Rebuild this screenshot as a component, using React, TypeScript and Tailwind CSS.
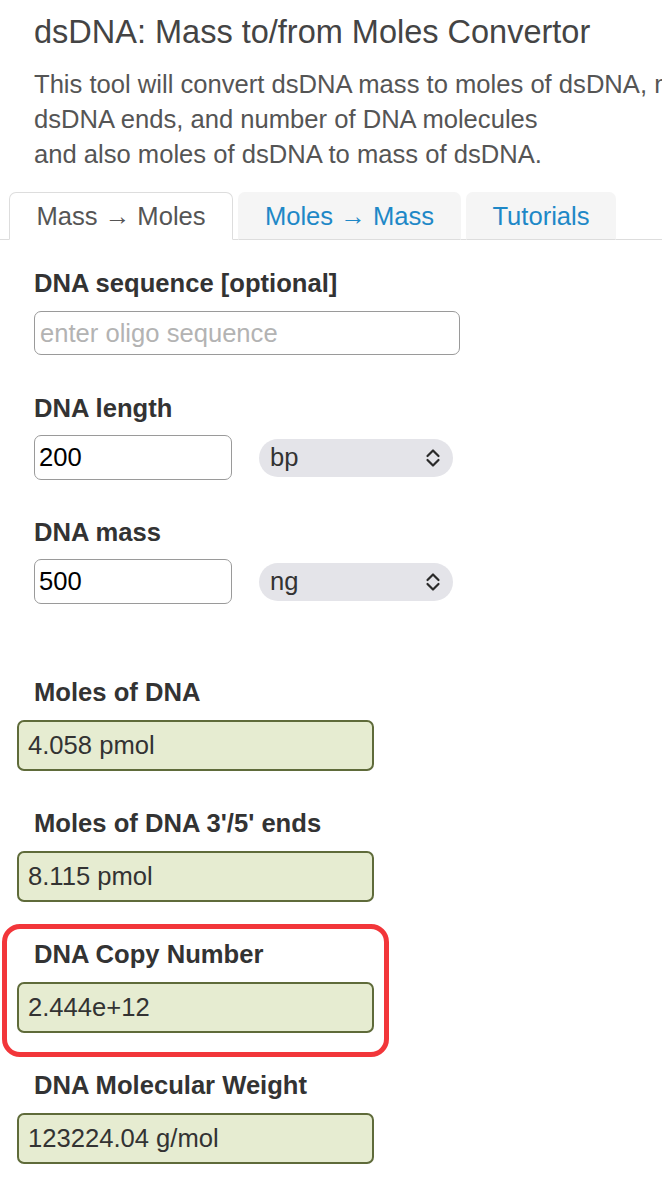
import { useState } from "react";

function UpDown() {
  return (
    <svg width="16" height="20" viewBox="0 0 16 20" fill="none">
      <path d="M2.5 8 L8 2.5 L13.5 8" stroke="#2a2a2a" strokeWidth="2.2" strokeLinecap="round" strokeLinejoin="round" />
      <path d="M2.5 12 L8 17.5 L13.5 12" stroke="#2a2a2a" strokeWidth="2.2" strokeLinecap="round" strokeLinejoin="round" />
    </svg>
  );
}

function Label({ children, className = "" }: { children: React.ReactNode; className?: string }) {
  return (
    <div className={`text-[25.6px] font-bold leading-[30px] text-[#333] whitespace-nowrap ${className}`}>{children}</div>
  );
}

function Output({ value }: { value: string }) {
  return (
    <div className="mt-[13px] flex h-[51px] w-[357px] items-center rounded-[7px] border-2 border-[#5f6b3a] bg-[#e6ecd1] pl-[9px] text-[25.6px] text-[#333]">
      {value}
    </div>
  );
}

function UnitRow({ value, unit }: { value: string; unit: string }) {
  return (
    <div className="mt-[12px] flex items-center gap-[27px]">
      <input
        defaultValue={value}
        className="h-[45px] w-[198px] rounded-[7px] border border-[#9a9a9a] bg-white px-[4px] text-[25.6px] text-black outline-none"
      />
      <div className="flex h-[38px] w-[194px] items-center justify-between rounded-full bg-[#e4e4e9] pl-[11px] pr-[12px] text-[25.6px] text-[#333]">
        <span>{unit}</span>
        <UpDown />
      </div>
    </div>
  );
}

export default function App() {
  const [tab, setTab] = useState(0);
  const tabs = [
    { name: "Mass → Moles", w: "w-[224px]" },
    { name: "Moles → Mass", w: "w-[223px]" },
    { name: "Tutorials", w: "w-[150px]" },
  ];

  const results = [
    { label: "Moles of DNA", value: "4.058 pmol" },
    { label: "Moles of DNA 3'/5' ends", value: "8.115 pmol" },
    { label: "DNA Copy Number", value: "2.444e+12", marked: true },
    { label: "DNA Molecular Weight", value: "123224.04 g/mol" },
  ];

  return (
    <div className="w-[662px] overflow-hidden bg-white pb-[34px] font-['Liberation_Sans',Arial,sans-serif]">
      <h1 className="ml-[34px] mt-[12px] whitespace-nowrap text-[32.5px] leading-[40px] text-[#444]">
        dsDNA: Mass to/from Moles Convertor
      </h1>
      <p className="ml-[34px] mt-[15px] whitespace-nowrap text-[25.6px] leading-[35px] text-[#555]">
        This tool will convert dsDNA mass to moles of dsDNA, moles of
        <br />
        dsDNA ends, and number of DNA molecules
        <br />
        and also moles of dsDNA to mass of dsDNA.
      </p>

      {/* tabs */}
      <div className="mt-[20px] flex items-end gap-[5px] border-b border-[#ddd] pl-[9px]">
        {tabs.map((t, i) => (
          <button
            key={t.name}
            onClick={() => setTab(i)}
            className={`-mb-px flex h-[48px] shrink-0 items-center justify-center rounded-t-[7px] text-[25.6px] ${t.w} ${
              i === tab
                ? "border border-[#ddd] border-b-white bg-white text-[#555]"
                : "border border-transparent border-b-[#ddd] bg-[#f5f5f5] text-[#1e88c7]"
            }`}
          >
            {t.name}
          </button>
        ))}
      </div>

      {/* inputs */}
      <div className="pl-[34px]">
        <Label className="mt-[28px]">DNA sequence [optional]</Label>
        <input
          placeholder="enter oligo sequence"
          className="mt-[13px] h-[44px] w-[426px] rounded-[7px] border border-[#9a9a9a] bg-white px-[5px] text-[25.6px] text-black outline-none placeholder:text-[#b3b3b3]"
        />

        <Label className="mt-[38px]">DNA length</Label>
        <UnitRow value="200" unit="bp" />

        <Label className="mt-[37px]">DNA mass</Label>
        <UnitRow value="500" unit="ng" />
      </div>

      {/* results */}
      <div className="mt-[73px] pl-[17px]">
        {results.map((r, i) => (
          <div key={r.label} className={`relative ${i > 0 ? "mt-[37px]" : ""}`}>
            <Label className="ml-[17px]">{r.label}</Label>
            <Output value={r.value} />
            {r.marked && (
              <div className="pointer-events-none absolute left-[-15px] top-[-15px] h-[133px] w-[387px] rounded-[18px] border-[5px] border-[#f2363a]" />
            )}
          </div>
        ))}
      </div>
    </div>
  );
}
